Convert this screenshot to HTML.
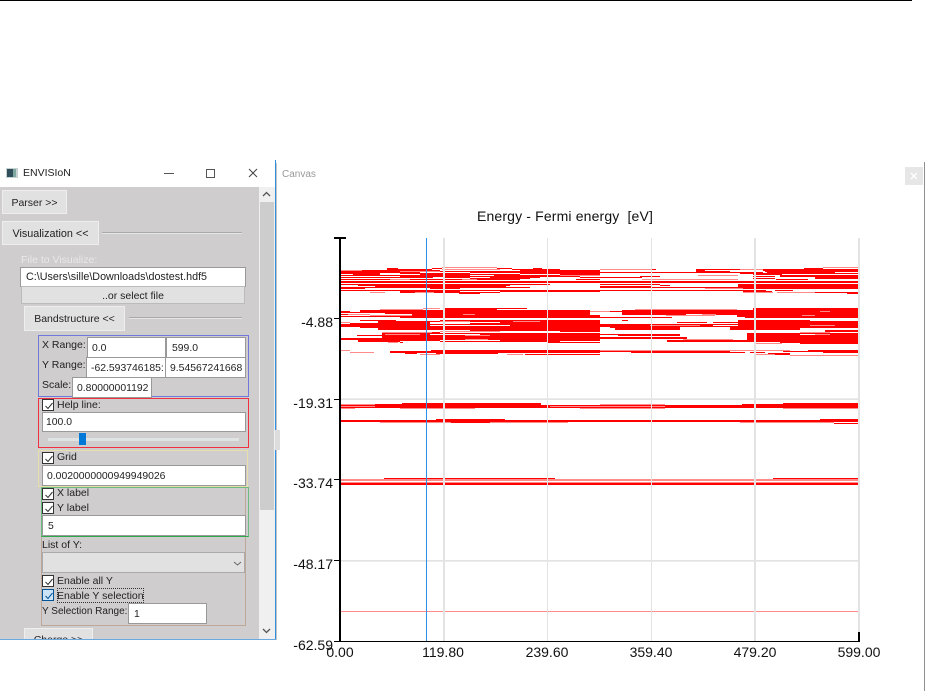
<!DOCTYPE html>
<html><head><meta charset="utf-8"><title>ENVISIoN</title>
<style>
html,body{margin:0;padding:0;background:#fff;width:925px;height:691px;overflow:hidden}
body{position:relative;font-family:"Liberation Sans",sans-serif;font-size:10.5px;color:#222}
.a{position:absolute;box-sizing:border-box;white-space:nowrap}
.b{position:absolute;box-sizing:border-box;background:#e1e1e1;border:1px solid #eee;text-align:center;white-space:nowrap;overflow:hidden}
.i{position:absolute;box-sizing:border-box;background:#fff;border:1px solid #999;white-space:nowrap;overflow:hidden;padding-left:4px;font-size:10.4px}
.c{position:absolute;box-sizing:border-box;width:12px;height:12px;background:#fff;border:1px solid #333}
.c svg{position:absolute;left:1px;top:1px}
.t{position:absolute;white-space:nowrap;line-height:13px;margin-top:1px}
.l{position:absolute;height:1px;background:#a9a9a9;border-bottom:1px solid #e6e6e6}
.y{position:absolute;font-size:14px;line-height:16px;color:#111;white-space:nowrap;text-align:right;width:50px;left:283px}
.x{position:absolute;font-size:14px;line-height:16px;color:#111;white-space:nowrap;text-align:center;width:70px;top:644px}
</style></head><body>
<div class="a" style="left:0;top:0;width:912px;height:1px;background:#000"></div>

<!-- window -->
<div class="a" style="left:0;top:187px;width:259px;height:453px;background:#cfcdce"></div>
<div class="a" style="left:259px;top:187px;width:16px;height:453px;background:#f0f0f0"></div>
<div class="a" style="left:260px;top:202px;width:14px;height:308px;background:#cdcdcd"></div>
<div class="a" style="left:275px;top:160px;width:1px;height:480px;background:#2f90e2"></div>
<div class="a" style="left:0;top:639px;width:276px;height:1px;background:#68a9e0"></div>
<div class="a" style="left:276px;top:163px;width:1px;height:477px;background:#c4c4c4"></div>
<div class="a" style="left:275px;top:430px;width:5px;height:20px;background:#dcdcdc"></div>

<!-- titlebar -->
<svg class="a" style="left:6px;top:168px" width="13" height="11"><rect width="12" height="10" y="0" fill="#c9d2d2"/><rect x="1" y="1" width="6" height="8" fill="#2f4f5b"/><rect x="7" y="1" width="3" height="8" fill="#7fa8a0"/></svg>
<div class="t" style="left:23px;top:166px;color:#222">ENVISIoN</div>
<div class="a" style="left:164px;top:173px;width:10px;height:1px;background:#555"></div>
<div class="a" style="left:206px;top:169px;width:9px;height:9px;border:1px solid #555"></div>
<svg class="a" style="left:248px;top:168px" width="10" height="10"><path d="M1 1L9 9M9 1L1 9" stroke="#444" stroke-width="1" fill="none"/></svg>
<svg class="a" style="left:262px;top:191px" width="9" height="6"><path d="M1 5L4.500 1.500L8 5" stroke="#555" stroke-width="1.300" fill="none"/></svg>
<svg class="a" style="left:262px;top:628px" width="9" height="6"><path d="M1 1L4.500 4.500L8 1" stroke="#555" stroke-width="1.300" fill="none"/></svg>

<!-- top controls -->
<div class="b" style="left:2px;top:190px;width:65px;height:24px;line-height:24px">Parser &gt;&gt;</div>
<div class="b" style="left:2px;top:221px;width:97px;height:24px;line-height:24px;font-size:10.8px">Visualization &lt;&lt;</div>
<div class="l" style="left:102px;top:232px;width:140px"></div>
<div class="t" style="left:21px;top:253px;color:#e9e9e9">File to Visualize:</div>
<div class="i" style="left:20px;top:267px;width:226px;height:20px;padding-left:5px;line-height:19px;font-size:10.75px">C:\Users\sille\Downloads\dostest.hdf5</div>
<div class="b" style="left:21px;top:286px;width:224px;height:18px;line-height:18px;border-color:#bbb">..or select file</div>
<div class="b" style="left:24px;top:306px;width:101px;height:25px;line-height:25px">Bandstructure &lt;&lt;</div>
<div class="l" style="left:129px;top:317px;width:113px"></div>

<!-- blue box -->
<div class="a" style="left:38px;top:335px;width:211px;height:62px;border:1px solid #7078dc"></div>
<div class="t" style="left:42px;top:338px">X Range:</div>
<div class="i" style="left:87px;top:337px;width:79px;height:21px;padding-left:4px;line-height:21px">0.0</div>
<div class="i" style="left:166px;top:337px;width:80px;height:21px;padding-left:5px;line-height:21px">599.0</div>
<div class="t" style="left:42px;top:358px">Y Range:</div>
<div class="i" style="left:86px;top:357px;width:80px;height:21px;padding-left:4px;line-height:21px">-62.593746185:</div>
<div class="i" style="left:165px;top:357px;width:81px;height:21px;padding-left:4px;line-height:21px">9.54567241668</div>
<div class="t" style="left:42px;top:378px">Scale:</div>
<div class="i" style="left:72px;top:377px;width:80px;height:21px;padding-left:4px;line-height:21px">0.80000001192</div>

<!-- red box -->
<div class="a" style="left:38px;top:398px;width:211px;height:50px;border:1px solid #f03040"></div>
<div class="c" style="left:42px;top:399px"><svg width="10" height="10"><path d="M1.500 5L4 7.500L8.500 2" stroke="#333" stroke-width="1" fill="none"/></svg></div>
<div class="t" style="left:57px;top:398px">Help line:</div>
<div class="i" style="left:42px;top:412px;width:204px;height:20px;padding-left:3px;line-height:20px">100.0</div>
<div class="a" style="left:48px;top:438px;width:191px;height:3px;background:#e0e3e3"></div>
<div class="a" style="left:79px;top:433px;width:7px;height:12px;background:#0078d7"></div>

<!-- yellow box -->
<div class="a" style="left:38px;top:450px;width:210px;height:37px;border:1px solid #e8dfa8"></div>
<div class="c" style="left:42px;top:452px"><svg width="10" height="10"><path d="M1.500 5L4 7.500L8.500 2" stroke="#333" stroke-width="1" fill="none"/></svg></div>
<div class="t" style="left:57px;top:450px">Grid</div>
<div class="i" style="left:42px;top:465px;width:204px;height:21px;padding-left:4px;line-height:21px">0.0020000000949949026</div>

<!-- tan box -->
<div class="a" style="left:41px;top:487px;width:205px;height:139px;border:1px solid #bda898"></div>
<!-- green box -->
<div class="a" style="left:41px;top:487px;width:208px;height:50px;border:1px solid #6dbb80;border-bottom-color:#2da84a"></div>
<div class="c" style="left:42px;top:488px"><svg width="10" height="10"><path d="M1.500 5L4 7.500L8.500 2" stroke="#333" stroke-width="1" fill="none"/></svg></div>
<div class="t" style="left:57px;top:486px">X label</div>
<div class="c" style="left:42px;top:502px"><svg width="10" height="10"><path d="M1.500 5L4 7.500L8.500 2" stroke="#333" stroke-width="1" fill="none"/></svg></div>
<div class="t" style="left:57px;top:501px">Y label</div>
<div class="i" style="left:42px;top:515px;width:204px;height:21px;padding-left:5px;line-height:21px">5</div>

<div class="t" style="left:42px;top:538px">List of Y:</div>
<div class="a" style="left:42px;top:552px;width:203px;height:21px;background:#e1e1e1;border:1px solid #aaa"></div>
<svg class="a" style="left:233px;top:561px" width="9" height="6"><path d="M1 1L4.500 4L8 1" stroke="#666" stroke-width="1" fill="none"/></svg>
<div class="c" style="left:42px;top:575px"><svg width="10" height="10"><path d="M1.500 5L4 7.500L8.500 2" stroke="#333" stroke-width="1" fill="none"/></svg></div>
<div class="t" style="left:57px;top:574px">Enable all Y</div>
<div class="c" style="left:42px;top:589px;background:#cce4f7;border-color:#005499"><svg width="10" height="10"><path d="M1.500 5L4 7.500L8.500 2" stroke="#005499" stroke-width="1" fill="none"/></svg></div>
<div class="a" style="left:57px;top:588px;width:87px;height:15px;border:1px dotted #333"></div>
<div class="t" style="left:57px;top:589px">Enable Y selection</div>
<div class="t" style="left:42px;top:604px;font-size:10px">Y Selection Range:</div>
<div class="i" style="left:128px;top:603px;width:79px;height:21px;padding-left:5px;line-height:21px">1</div>
<div class="a" style="left:24px;top:628px;width:69px;height:11px;overflow:hidden;background:#e1e1e1;border:1px solid #eee;border-bottom:0;text-align:center;line-height:22px">Charge &gt;&gt;</div>

<!-- canvas header -->
<div class="t" style="left:282px;top:167px;color:#999;font-size:10px">Canvas</div>
<div class="a" style="left:905px;top:167px;width:18px;height:18px;background:#e6e6e6"></div>
<svg class="a" style="left:910px;top:172px" width="8" height="8"><path d="M1 1L7 7M7 1L1 7" stroke="#fff" stroke-width="1.300" fill="none"/></svg>
<div class="a" style="left:924px;top:162px;width:1px;height:529px;background:#8f8f8f"></div>

<!-- chart -->
<svg class="a" style="left:0;top:0" width="925" height="691" viewBox="0 0 925 691">
<g fill="none" shape-rendering="crispEdges" stroke-width="1">
<g stroke="#ff0000">
<!-- band 1 -->
<path d="M387 268.500H398M432 268.500H442M497 268.500H512M533 268.500H542M804 268.500H823"/>
<path d="M387 269.500H432M512 269.500H560M652 269.500H656M696 269.500H740M763 269.500H858"/>
<path d="M362 270.500H440M520 270.500H600M696 270.500H705M763 270.500H858"/>
<path d="M341 271.500H400M440 271.500H600M696 271.500H730M765 271.500H858"/>
<path d="M341 272.500H420M470 272.500H740M731 272.500H763M767 272.500H835"/>
<path d="M341 273.500H380M400 273.500H470M520 273.500H600M740 273.500H858"/>
<path d="M353 274.500H380M420 274.500H520M560 274.500H600M753 274.500H782"/>
<path d="M341 275.500H470M494 275.500H560M780 275.500H858"/>
<path d="M400 276.500H580M640 276.500H660M753 276.500H775M780 276.500H858"/>
<path d="M341 277.500H433M444 277.500H470M490 277.500H540M580 277.500H642M815 277.500H858"/>
<path d="M470 278.500H530M753 278.500H775M815 278.500H858"/>
<path d="M340 279.500H390M410 279.500H520M576 279.500H600M776 279.500H808"/>
<path d="M341 281.500H858"/>
<path d="M341 282.500H858"/>
<path d="M341 284.500H550M600 284.500H660M738 284.500H858"/>
<path d="M358 285.500H510M660 285.500H670M738 285.500H858"/>
<path d="M375 286.500H506M600 286.500H652M738 286.500H858"/>
<path d="M341 287.500H530M600 287.500H738M738 287.500H858"/>
<path d="M341 288.500H365M430 288.500H460M743 288.500H858"/>
<path d="M341 290.500H766M775 290.500H793"/>
<path d="M400 291.500H460M500 291.500H600M743 291.500H772"/>
<path d="M400 292.500H415M434 292.500H500M800 292.500H858"/>
<path d="M459 293.500H480M847 293.500H858"/>
<!-- band 2 -->
<path d="M444 308.500H527M753 308.500H858"/>
<path d="M443 309.500H497M753 309.500H858"/>
<path d="M360 310.500H590M622 310.500H858"/>
<path d="M341 311.500H350M360 311.500H590M610 311.500H858"/>
<path d="M341 312.500H590M622 312.500H858"/>
<path d="M385 313.500H590M622 313.500H858"/>
<path d="M341 314.500H350M412 314.500H590M622 314.500H686M716 314.500H858"/>
<path d="M412 315.500H600M737 315.500H858"/>
<path d="M341 316.500H600M737 316.500H858"/>
<path d="M400 317.500H672M745 317.500H858"/>
<path d="M360 320.500H396M440 320.500H600M622 320.500H628M738 320.500H810"/>
<path d="M378 321.500H600M738 321.500H858"/>
<path d="M378 322.500H430M500 322.500H600M677 322.500H707M713 322.500H858"/>
<path d="M350 323.500H430M470 323.500H600M738 323.500H858"/>
<path d="M341 324.500H858"/>
<path d="M341 325.500H430M510 325.500H713M738 325.500H858"/>
<path d="M341 326.500H858"/>
<path d="M360 327.500H600M610 327.500H680M730 327.500H858"/>
<path d="M378 328.500H600M615 328.500H680M730 328.500H800"/>
<path d="M378 329.500H600M615 329.500H680M730 329.500H800"/>
<path d="M470 330.500H600M825 330.500H858"/>
<path d="M441 331.500H500M560 331.500H600M825 331.500H858"/>
<path d="M400 332.500H440"/>
<path d="M382 333.500H600M747 333.500H858"/>
<path d="M382 334.500H430M480 334.500H680M747 334.500H800M830 334.500H858"/>
<path d="M357 335.500H600M618 335.500H680M747 335.500H858"/>
<path d="M382 336.500H600M747 336.500H858"/>
<path d="M382 337.500H687M747 337.500H858"/>
<path d="M341 338.500H687M747 338.500H858"/>
<path d="M341 339.500H600M747 339.500H858"/>
<path d="M358 340.500H440M500 340.500H600M667 340.500H858"/>
<path d="M358 341.500H400M440 341.500H560M667 341.500H858"/>
<path d="M400 342.500H403M548 342.500H600M780 342.500H858"/>
<path d="M800 343.500H858"/>
<path d="M431 350.500H600M808 350.500H858"/>
<path d="M390 351.500H730M783 351.500H858"/>
<path d="M390 352.500H600M631 352.500H745M750 352.500H765M823 352.500H858"/>
<path d="M405 353.500H417M436 353.500H498M768 353.500H790"/>
<path d="M525 354.500H600M768 354.500H790"/>
<!-- band 3 -->
<path d="M402 403.500H541M783 403.500H858"/>
<path d="M375 404.500H541M742 404.500H858"/>
<path d="M341 405.500H858"/>
<path d="M375 406.500H550M665 406.500H858"/>
<path d="M341 407.500H858"/>
<path d="M436 419.500H505M820 419.500H858"/>
<path d="M341 420.500H858"/>
<path d="M341 421.500H858"/>
<path d="M451 422.500H490M834 423.500H858"/>
<!-- band 4 -->
<path d="M384 478.500H555M773 478.500H858"/>
<path d="M341 483.500H858"/>
<path d="M341 484.500H858"/>
</g>
<g stroke="#ff8a8a">
<path d="M442 267.500H497M823 267.500H858"/>
<path d="M442 269.500H500M600 269.500H652M740 269.500H763"/>
<path d="M341 270.500H362"/>
<path d="M400 271.500H440"/>
<path d="M698 275.500H738M560 275.500H600"/>
<path d="M390 279.500H410M462 279.500H477M642 279.500H738"/>
<path d="M738 280.500H765"/>
<path d="M705 288.500H743"/>
<path d="M370 292.500H385M415 292.500H434M743 292.500H773M777 292.500H815"/>
<path d="M423 308.500H440M380 309.500H423M635 309.500H737"/>
<path d="M590 311.500H610M820 311.500H830"/>
<path d="M348 314.500H370M463 314.500H475M702 314.500H716"/>
<path d="M370 315.500H412M666 315.500H715M802 315.500H815"/>
<path d="M440 321.500H470M513 321.500H540"/>
<path d="M341 322.500H350"/>
<path d="M650 325.500H700M810 325.500H835"/>
<path d="M440 331.500H500"/>
<path d="M382 332.500H432M800 332.500H830"/>
<path d="M385 334.500H420M465 335.500H490M815 334.500H830"/>
<path d="M465 339.500H488M683 339.500H733"/>
<path d="M388 342.500H398M755 343.500H782"/>
<path d="M341 350.500H350M600 350.500H790"/>
<path d="M350 352.500H374"/>
<path d="M420 354.500H440M507 354.500H523M755 354.500H775"/>
<path d="M790 355.500H858"/>
<path d="M341 404.500H375M600 404.500H665"/>
<path d="M341 406.500H375M550 406.500H665"/>
<path d="M341 408.500H355M400 408.500H475M580 408.500H665M783 408.500H858"/>
<path d="M380 422.500H451M490 422.500H568M740 422.500H834"/>
<path d="M341 479.500H858"/>
<path d="M341 480.500H858"/>
<path d="M341 482.500H858"/>
<path d="M341 611.500H858"/>
</g>
<g stroke="#ffffff">
<path d="M341 280.500H858"/>
<path d="M341 283.500H858"/>
<path d="M341 289.500H600M740 289.500H858"/>
<path d="M380 318.500H858"/>
<path d="M430 323.500H470M600 323.500H738"/>
<path d="M430 325.500H510M713 325.500H738"/>
<path d="M600 322.500H677M430 322.500H500"/>
<path d="M341 331.500H382"/>
<path d="M430 334.500H480M600 333.500H747"/>
<path d="M600 320.500H622"/>
</g>
<!-- grid -->
<g stroke="#e3e3e3">
<path d="M341 399.500H859M341 560.500H859"/>
<path d="M341 398.500H859M341 561.500H859" stroke="#ececec"/>
<path d="M443.500 238V641M444.500 238V641"/>
<path d="M547.500 238V641M651.500 238V641"/>
<path d="M755.500 238V641M754.500 238V641"/>
<path d="M858.500 238V641M859.500 238V641"/>
</g>
<path d="M426.500 238V641" stroke="#2d8ee6"/>
<g stroke="#000">
<path d="M340 237V642" stroke-width="2"/>
<path d="M334 238H346" stroke-width="2"/>
<path d="M340 641.500H859"/>
<path d="M859 632V642" stroke-width="2"/>
<path d="M334 318.500H341M334 399.500H341M334 479.500H341M334 560.500H341M334 641.500H341"/>
</g>
</g>
</svg>

<div class="t" style="left:477px;top:208px;font-size:14px;line-height:15px;color:#111;width:176px;white-space:pre;letter-spacing:.15px">Energy - Fermi energy  [eV]</div>
<div class="y" style="top:314px">-4.88</div>
<div class="y" style="top:395px">-19.31</div>
<div class="y" style="top:475px">-33.74</div>
<div class="y" style="top:556px">-48.17</div>
<div class="y" style="top:637px">-62.59</div>
<div class="x" style="left:305px">0.00</div>
<div class="x" style="left:408px">119.80</div>
<div class="x" style="left:512px">239.60</div>
<div class="x" style="left:616px">359.40</div>
<div class="x" style="left:720px">479.20</div>
<div class="x" style="left:824px">599.00</div>
</body></html>
